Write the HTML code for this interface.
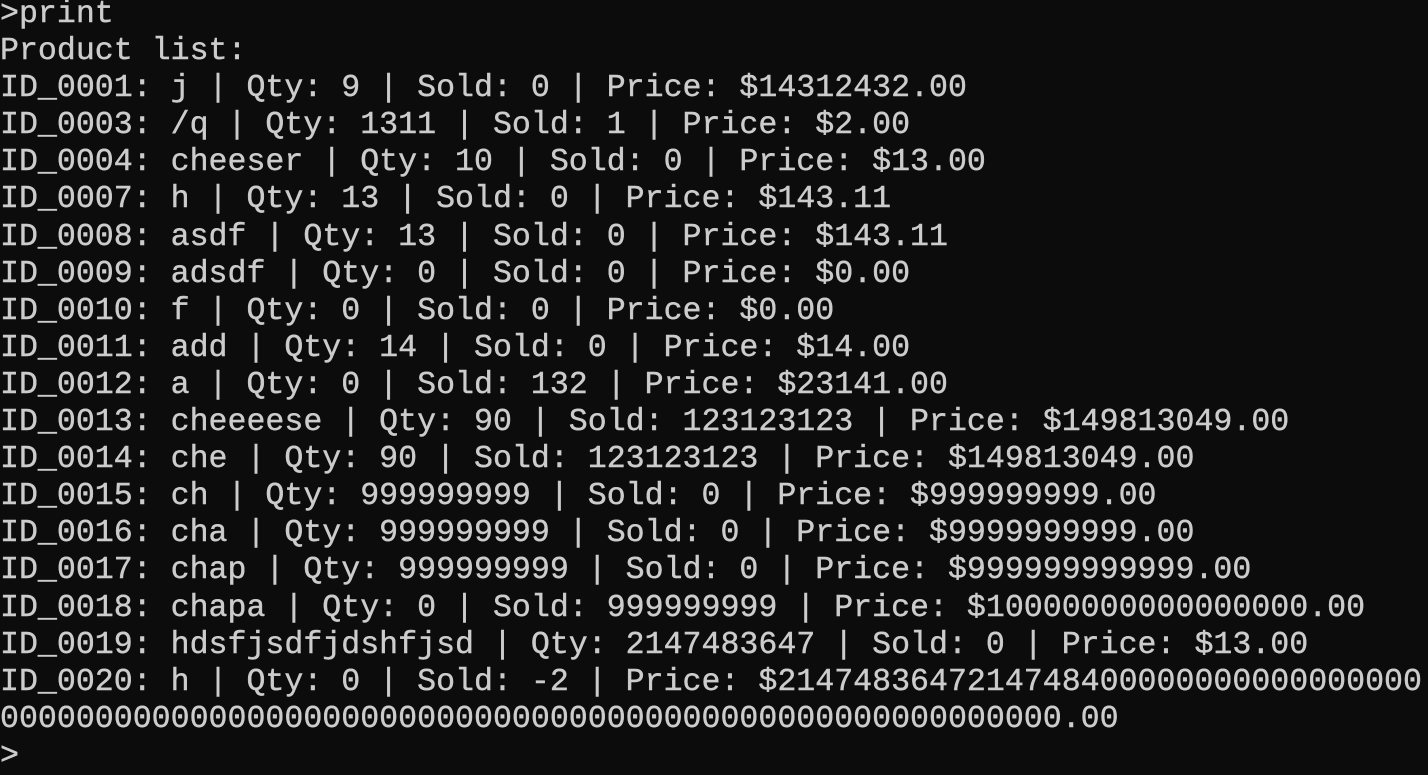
<!DOCTYPE html>
<html><head><meta charset="utf-8"><style>
html,body{margin:0;padding:0;background:#0c0c0c;width:1428px;height:772px;overflow:hidden}
pre{margin:0;position:absolute;left:0;top:-4px;font-family:"Liberation Mono","DejaVu Sans Mono",monospace;font-size:31.6px;line-height:37.1px;color:#cccccc;white-space:pre;-webkit-text-stroke:0.4px #cccccc}
</style></head><body><pre>&gt;print
Product list:
ID_0001: j | Qty: 9 | Sold: 0 | Price: $14312432.00
ID_0003: /q | Qty: 1311 | Sold: 1 | Price: $2.00
ID_0004: cheeser | Qty: 10 | Sold: 0 | Price: $13.00
ID_0007: h | Qty: 13 | Sold: 0 | Price: $143.11
ID_0008: asdf | Qty: 13 | Sold: 0 | Price: $143.11
ID_0009: adsdf | Qty: 0 | Sold: 0 | Price: $0.00
ID_0010: f | Qty: 0 | Sold: 0 | Price: $0.00
ID_0011: add | Qty: 14 | Sold: 0 | Price: $14.00
ID_0012: a | Qty: 0 | Sold: 132 | Price: $23141.00
ID_0013: cheeeese | Qty: 90 | Sold: 123123123 | Price: $149813049.00
ID_0014: che | Qty: 90 | Sold: 123123123 | Price: $149813049.00
ID_0015: ch | Qty: 999999999 | Sold: 0 | Price: $999999999.00
ID_0016: cha | Qty: 999999999 | Sold: 0 | Price: $9999999999.00
ID_0017: chap | Qty: 999999999 | Sold: 0 | Price: $999999999999.00
ID_0018: chapa | Qty: 0 | Sold: 999999999 | Price: $10000000000000000.00
ID_0019: hdsfjsdfjdshfjsd | Qty: 2147483647 | Sold: 0 | Price: $13.00
ID_0020: h | Qty: 0 | Sold: -2 | Price: $2147483647214748400000000000000000
00000000000000000000000000000000000000000000000000000000.00
&gt;</pre></body></html>
